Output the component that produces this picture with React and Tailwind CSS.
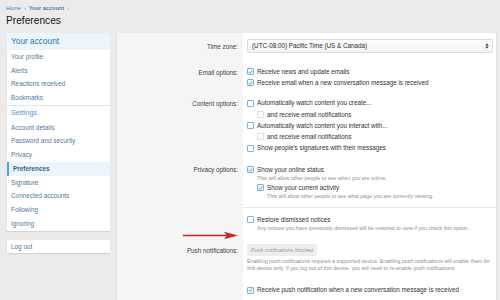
import React from 'react';

const Box = ({ checked, faded }) => (
  <span
    className={`inline-flex w-[7px] h-[7px] shrink-0 items-center justify-center border rounded-[1px] ${
      faded ? 'border-[#dcdcdc] bg-white' : checked ? 'border-[#7db3dc] bg-[#eaf4fb]' : 'border-[#7db3dc] bg-white'
    }`}
  >
    {checked && (
      <svg width="6" height="6" viewBox="0 0 6 6">
        <path d="M1 3.2 L2.4 4.6 L5 1.4" fill="none" stroke="#3f8fce" strokeWidth="0.9" />
      </svg>
    )}
  </span>
);

const Check = ({ checked, faded, indent, children }) => (
  <div className={`flex items-center gap-[3px] h-[11.25px] ${indent ? 'pl-[10px]' : ''}`}>
    <Box checked={checked} faded={faded} />
    <span className="text-[6.3px] text-[#2f2f2f]">{children}</span>
  </div>
);

const Hint = ({ indent, children }) => (
  <div className={`text-[5.3px] leading-[7.5px] text-[#8f8f8f] ${indent ? 'pl-[20px]' : 'pl-[10px]'}`}>{children}</div>
);

const Row = ({ label, top = 0, labelTop, children, divider }) => (
  <div className="flex">
    <div className="w-[126px] shrink-0 bg-[#f5f5f5] text-right pr-[5px] text-[6.3px] leading-[9px] text-[#404040]" style={{ paddingTop: labelTop ?? top }}>
      {label}
    </div>
    <div className={`flex-1 bg-white pl-[4px] pr-[3px] ${divider ? 'border-t border-[#e6e6e6]' : ''}`} style={{ paddingTop: top }}>
      {children}
    </div>
  </div>
);

const SideItem = ({ children, active }) => (
  <div
    className={`h-[13.7px] flex items-center pl-[4px] text-[6.4px] ${
      active ? 'bg-[#edf5fc] border-l-2 border-[#47a7eb] pl-[2px] font-bold text-[#3a5f80]' : 'text-[#55789a]'
    }`}
  >
    {children}
  </div>
);

export default function App() {
  return (
    <div className="relative w-[500px] h-[300px] overflow-hidden bg-[#ebebeb] font-['Liberation_Sans',Arial,sans-serif]">
      <div className="pl-[6px] pt-[4px] h-[12px] flex items-center gap-[3px] text-[5.6px] text-[#4a7fae]">
        <span>Home</span>
        <span className="text-[#9aa]">›</span>
        <span className="font-bold">Your account</span>
        <span className="text-[#9aa]">›</span>
      </div>
      <div className="pl-[6px] h-[21px] text-[10.2px] text-[#141414] leading-[18px]">Preferences</div>

      <div className="flex gap-[6px] pl-[7px] pr-[3px]">
        <div className="w-[103px] shrink-0">
          <div className="bg-white shadow-[0_1px_1px_rgba(0,0,0,0.1)] pb-[1px]">
            <div className="h-[17px] flex items-center pl-[4px] bg-[#edf5fc] text-[8.3px] text-[#2577b1]">Your account</div>
            <SideItem>Your profile</SideItem>
            <SideItem>Alerts</SideItem>
            <SideItem>Reactions received</SideItem>
            <SideItem>Bookmarks</SideItem>
            <div className="h-[16px] flex items-center pl-[4px] border-t border-[#e3e3e3] text-[7.2px] text-[#4d96cc]">Settings</div>
            <SideItem>Account details</SideItem>
            <SideItem>Password and security</SideItem>
            <SideItem>Privacy</SideItem>
            <SideItem active>Preferences</SideItem>
            <SideItem>Signature</SideItem>
            <SideItem>Connected accounts</SideItem>
            <SideItem>Following</SideItem>
            <SideItem>Ignoring</SideItem>
          </div>
          <div className="mt-[9px] h-[13px] bg-white shadow-[0_1px_1px_rgba(0,0,0,0.1)] flex items-center pl-[4px] text-[6.4px] text-[#55789a]">
            Log out
          </div>
        </div>

        <div className="flex-1 border border-[#e0e0e0] border-t-0">
          <Row label="Time zone:" top={6} labelTop={8.5}>
            <div className="h-[14px] rounded-[2px] border border-[#dcdcdc] bg-[linear-gradient(#fdfdfd,#f3f3f3)] flex items-center justify-between pl-[4px] pr-[3px] text-[6.3px] text-[#2f2f2f]">
              <span>(UTC-08:00) Pacific Time (US &amp; Canada)</span>
              <svg width="4" height="6" viewBox="0 0 4 6">
                <path d="M0.3 2.4 L2 0.4 L3.7 2.4 Z M0.3 3.6 L2 5.6 L3.7 3.6 Z" fill="#333" />
              </svg>
            </div>
          </Row>
          <Row label="Email options:" top={13} labelTop={14.5}>
            <Check checked>Receive news and update emails</Check>
            <Check checked>Receive email when a new conversation message is received</Check>
          </Row>
          <Row label="Content options:" top={9} labelTop={10.5}>
            <Check>Automatically watch content you create...</Check>
            <Check indent faded>and receive email notifications</Check>
            <Check>Automatically watch content you interact with...</Check>
            <Check indent faded>and receive email notifications</Check>
            <Check>Show people's signatures with their messages</Check>
          </Row>
          <Row label="Privacy options:" top={11} labelTop={11.5}>
            <div className="h-[10px] flex items-center gap-[3px]">
              <Box checked />
              <span className="text-[6.3px] text-[#2f2f2f]">Show your online status</span>
            </div>
            <Hint>This will allow other people to see when you are online.</Hint>
            <div className="h-[11px] flex items-center gap-[3px] pl-[10px]">
              <Box checked />
              <span className="text-[6.3px] text-[#2f2f2f]">Show your current activity</span>
            </div>
            <Hint indent>This will allow other people to see what page you are currently viewing.</Hint>
            <div className="h-[6px]" />
          </Row>
          <Row label="" top={7} divider>
            <div className="h-[10px] flex items-center gap-[3px]">
              <Box />
              <span className="text-[6.3px] text-[#2f2f2f]">Restore dismissed notices</span>
            </div>
            <Hint>Any notices you have previously dismissed will be restored to view if you check this option.</Hint>
          </Row>
          <Row label="Push notifications:" top={12} labelTop={14}>
            <div className="flex">
              <div className="h-[12px] flex items-center px-[4px] rounded-[2px] bg-[#eeeeee] text-[5.4px] italic text-[#9a9a9a]">
                Push notifications blocked
              </div>
            </div>
            <div className="pt-[2px] text-[5.3px] leading-[7.2px] text-[#8f8f8f]">
              Enabling push notifications requires a supported device. Enabling push notifications will enable them for this device only. If you log out of this device, you will need to re-enable push notifications.
            </div>
            <div className="pt-[12px] flex items-center gap-[3px] h-[23px]">
              <Box checked />
              <span className="text-[6.3px] text-[#2f2f2f]">Receive push notification when a new conversation message is received</span>
            </div>
            <div className="h-[10px]" />
          </Row>
        </div>
      </div>

      <svg className="absolute left-[182px] top-[231px]" width="58" height="9" viewBox="0 0 58 9">
        <line x1="1" y1="4.5" x2="46" y2="4.5" stroke="#c9252b" strokeWidth="1.3" />
        <path d="M42 0.8 L56 4.5 L42 8.2 L45 4.5 Z" fill="#c9252b" />
      </svg>
    </div>
  );
}
